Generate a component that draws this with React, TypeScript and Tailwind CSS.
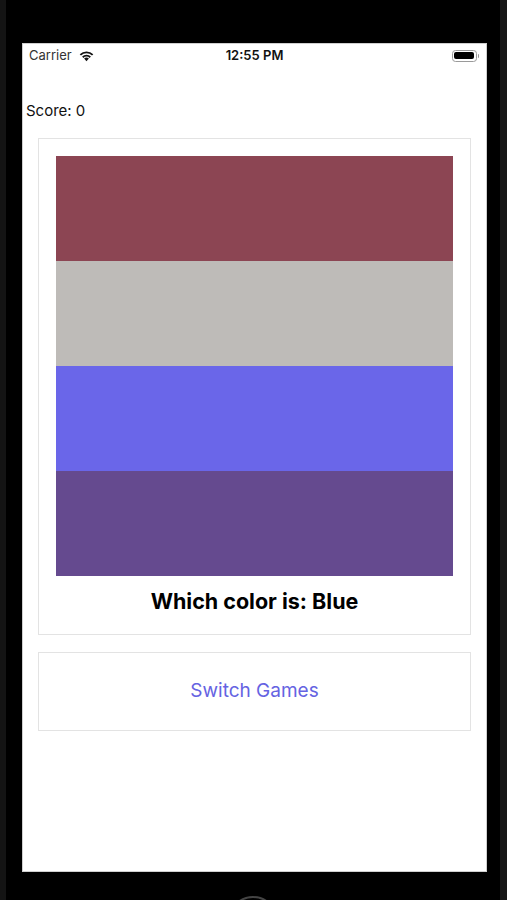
import React from "react";

const stripes = ["#8c4553", "#bebbb8", "#6a66e9", "#654a8f"];

function WifiIcon() {
  return (
    <svg width="17" height="12" viewBox="0 0 16 12" className="ml-[6px]">
      <path d="M8 11.2 L5.6 8.6 A3.4 3.4 0 0 1 10.4 8.6 Z" fill="#111" />
      <path d="M3.6 6.6 A6.2 6.2 0 0 1 12.4 6.6 L11.1 7.9 A4.4 4.4 0 0 0 4.9 7.9 Z" fill="#111" />
      <path d="M1.2 4.2 A9.6 9.6 0 0 1 14.8 4.2 L13.5 5.5 A7.8 7.8 0 0 0 2.5 5.5 Z" fill="#111" />
    </svg>
  );
}

function BatteryIcon() {
  return (
    <div className="flex items-center">
      <div className="flex h-[12px] w-[25px] items-center rounded-[3.5px] border border-[#9a9a9a] p-[1.5px]">
        <div className="h-full w-full rounded-[2px] bg-black" />
      </div>
      <div className="ml-[1px] h-[4px] w-[1.5px] rounded-r-sm bg-[#9a9a9a]" />
    </div>
  );
}

export default function App() {
  return (
    <div
      className="flex h-[900px] w-[507px] flex-col items-start overflow-hidden border-l-[6px] border-r-[7px] border-l-[#141414] border-r-[#161616] bg-black"
      style={{ fontFamily: "Inter, 'Noto Sans', sans-serif" }}
    >
      <div className="ml-[16px] mt-[43px] flex h-[829px] w-[465px] shrink-0 flex-col border border-[#cfcfcf] bg-white">
        <div className="relative flex h-[23px] shrink-0 items-center px-[6px] text-[13px] text-[#111]">
          <span className="text-[#333]">Carrier</span>
          <WifiIcon />
          <span className="absolute left-1/2 -translate-x-1/2 font-semibold">12:55 PM</span>
          <div className="ml-auto mr-[1px]">
            <BatteryIcon />
          </div>
        </div>

        <div className="mt-[32px] pl-[3px] text-[15px] leading-[24px] text-[#111]">Score: 0</div>

        <div className="ml-[15px] mt-[15px] w-[433px] shrink-0 border border-[#e3e3e3] p-[17px] pb-[19px]">
          <div className="flex flex-col">
            {stripes.map((c) => (
              <div key={c} className="h-[105px] w-full" style={{ backgroundColor: c }} />
            ))}
          </div>
          <div className="mt-[11px] text-center text-[21.5px] font-bold leading-[28px] text-black">
            Which color is: Blue
          </div>
        </div>

        <div className="ml-[15px] mt-[17px] flex h-[79px] w-[433px] shrink-0 items-center justify-center border border-[#e3e3e3]">
          <span className="text-[19px] text-[#6563e2]">Switch Games</span>
        </div>
      </div>

      <div className="mt-[24px] h-[50px] w-[50px] shrink-0 self-center rounded-full border-2 border-[#444]" />
    </div>
  );
}
